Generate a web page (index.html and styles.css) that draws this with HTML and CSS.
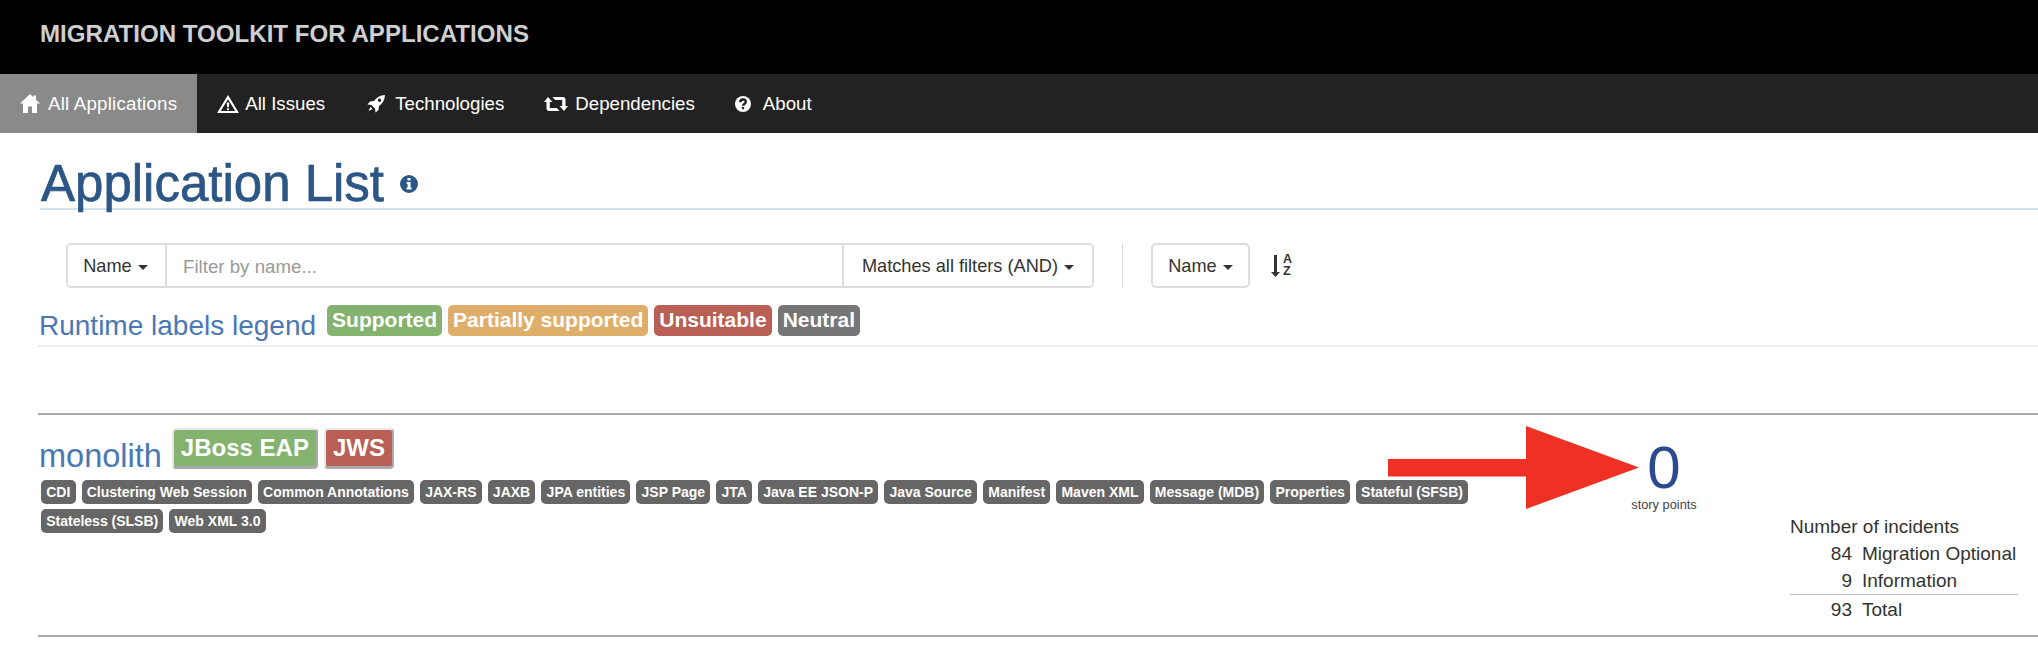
FILE: index.html
```html
<!DOCTYPE html>
<html lang="en">
<head>
    <meta charset="UTF-8">
    <meta name="viewport" content="width=device-width, initial-scale=1.0">
    <title>Application List</title>
    <link rel="stylesheet" href="styles.css">
</head>
<body>
    <header class="brand-bar">MIGRATION TOOLKIT FOR APPLICATIONS</header>
    <nav class="main-nav">
        <a class="nav-item active">
            <svg class="nav-icon" width="20" height="19" viewBox="0 0 20 19"><path d="M10 0 L13.5 3.300 V1.500 H16 V5.700 L20 9.600 H17 V19 H12 V12.500 H8 V19 H3 V9.600 H0 Z"/></svg>
            All Applications
        </a>
        <a class="nav-item issues">
            <svg class="nav-icon" width="22" height="18" viewBox="0 0 23 19"><path fill-rule="evenodd" d="M11.500 0 L23 19 H0 Z M11.500 4.500 L3.800 17 H19.200 Z M10.200 8 H12.800 L12.400 13 H10.600 Z M10.400 14 H12.600 V16 H10.400 Z"/></svg>
            All Issues
        </a>
        <a class="nav-item">
            <svg class="nav-icon" width="20" height="18" viewBox="0 0 20 18"><path fill-rule="evenodd" d="M18 0 C13 .3 9.500 2.500 7 6 L3 6.500 L.5 9.500 L4.500 10 L8 13.500 L8.500 17.500 L11.500 15 L12 11 C15.500 8.500 17.700 5 18 0 Z M12.500 3.600 A1.700 1.700 0 1 0 12.500 7 A1.700 1.700 0 1 0 12.500 3.600 Z M3.500 12 L5.500 14 L1.500 16 Z"/></svg>
            Technologies
        </a>
        <a class="nav-item">
            <svg class="nav-icon retweet" width="24" height="14" viewBox="0 0 24 14"><path d="M4 0 L8.500 5 H5.800 V11 H13 L15.500 14 H5 C3.500 14 2.500 13 2.500 11.500 V5 H0 Z M20 14 L15.500 9 H18.200 V3 H11 L8.500 0 H19 C20.500 0 21.500 1 21.500 2.500 V9 H24 Z"/></svg>
            Dependencies
        </a>
        <a class="nav-item">
            <svg class="nav-icon" width="20" height="16" viewBox="0 0 20 16"><circle cx="8" cy="8" r="8"/><path class="icon-cut" d="M5.200 6.200 C5.200 2.600 10.800 2.600 10.800 5.800 C10.800 8 8 7.800 8 9.800"/><rect class="icon-dot" x="6.900" y="11" width="2.200" height="2.200"/></svg>
            About
        </a>
    </nav>

    <main class="content">
        <div class="page-header">
            <h1>Application List</h1>
            <svg class="info-icon" width="18" height="18" viewBox="0 0 18 18"><path fill-rule="evenodd" d="M9 0 A9 9 0 1 0 9 18 A9 9 0 1 0 9 0 Z M7.400 3 H10.600 V5.600 H7.400 Z M6.600 7 H10.600 V12.600 H11.600 V14.600 H6.600 V12.600 H7.600 V9 H6.600 Z"/></svg>
        </div>

        <div class="toolbar">
            <div class="filter-group">
                <button class="tool-btn name-btn">Name <span class="caret"></span></button>
                <input class="filter-input" type="text" placeholder="Filter by name...">
                <button class="tool-btn match-btn">Matches all filters (AND) <span class="caret"></span></button>
            </div>
            <span class="tool-divider"></span>
            <button class="tool-btn sort-btn">Name <span class="caret"></span></button>
            <div class="sort-icon">
                <svg width="9" height="22" viewBox="0 0 9 22"><path d="M3 0 H6 V17 H9 L4.500 22 L0 17 H3 Z"/></svg>
                <span class="sort-letters"><span>A</span><span>Z</span></span>
            </div>
        </div>

        <div class="legend">
            <span class="legend-title">Runtime labels legend</span>
            <span class="legend-label supported">Supported</span>
            <span class="legend-label partial">Partially supported</span>
            <span class="legend-label unsuitable">Unsuitable</span>
            <span class="legend-label neutral">Neutral</span>
        </div>

        <section class="app-row">
            <div class="app-info">
                <div class="app-title">
                    <a class="app-name">monolith</a>
                    <span class="runtime supported">JBoss EAP</span>
                    <span class="runtime unsuitable">JWS</span>
                </div>
                <div class="tags">
                    <span class="tag">CDI</span>
                    <span class="tag">Clustering Web Session</span>
                    <span class="tag">Common Annotations</span>
                    <span class="tag">JAX-RS</span>
                    <span class="tag">JAXB</span>
                    <span class="tag">JPA entities</span>
                    <span class="tag">JSP Page</span>
                    <span class="tag">JTA</span>
                    <span class="tag">Java EE JSON-P</span>
                    <span class="tag">Java Source</span>
                    <span class="tag">Manifest</span>
                    <span class="tag">Maven XML</span>
                    <span class="tag">Message (MDB)</span>
                    <span class="tag">Properties</span>
                    <span class="tag">Stateful (SFSB)</span>
                    <span class="tag">Stateless (SLSB)</span>
                    <span class="tag">Web XML 3.0</span>
                </div>
            </div>
            <div class="story">
                <div class="story-count">0</div>
                <div class="story-label">story points</div>
            </div>
            <table class="incidents">
                <tr><th colspan="2">Number of incidents</th></tr>
                <tr><td class="num">84</td><td>Migration Optional</td></tr>
                <tr><td class="num">9</td><td>Information</td></tr>
                <tr class="total"><td class="num">93</td><td>Total</td></tr>
            </table>
            <svg class="arrow" width="251" height="83" viewBox="0 0 251 83"><polygon points="0,33 138,33 138,0 251,41.500 138,83 138,50.500 0,50.500"/></svg>
        </section>
    </main>
</body>
</html>
```

FILE: styles.css
```css
body {
    font-family: "Liberation Sans", Arial, sans-serif;
    font-size: 18.7px;
    color: #333;
    background-color: white;
    margin: 0;
    overflow: hidden;
}
.brand-bar {
    background-color: black;
    color: #cfcfcf;
    font-size: 24.1px;
    font-weight: bold;
    height: 74px;
    line-height: 68px;
    padding-left: 40px;
}
.main-nav {
    display: flex;
    height: 59px;
    background-color: #222;
}
.nav-item {
    display: flex;
    align-items: center;
    padding: 0 20px;
    color: white;
}
.nav-item.active {
    background-color: #8a8a8a;
    letter-spacing: 0.22px;
}
.nav-item.issues {
    padding-right: 22px;
}
.nav-icon {
    fill: white;
    margin-right: 8px;
}
.issues .nav-icon {
    margin-right: 6px;
}
.nav-icon.retweet {
    margin-right: 7px;
}
.icon-cut {
    fill: none;
    stroke: #222;
    stroke-width: 2.4;
}
.icon-dot {
    fill: #222;
}
.content {
    padding-left: 38px;
}
.page-header {
    display: flex;
    align-items: flex-end;
    height: 75px;
    margin-left: 2px;
    border-bottom: 2px solid #d3e1ec;
}
h1 {
    margin: 0 0 0 1px;
    font-size: 51px;
    line-height: 48px;
    font-weight: normal;
    color: #2b5685;
    -webkit-text-stroke: 0.7px #2b5685;
}
.info-icon {
    fill: #2b5685;
    margin-left: 16px;
    margin-bottom: 15px;
}
.toolbar {
    display: flex;
    align-items: stretch;
    height: 45px;
    margin: 33px 0 0 28px;
}
.filter-group {
    display: flex;
    width: 1028px;
    border: 2px solid #ddd;
    border-radius: 5px;
    box-sizing: border-box;
}
.tool-btn {
    font-family: inherit;
    font-size: 18.2px;
    color: #333;
    background-color: white;
    border: none;
    padding: 2px 0 0;
}
.name-btn {
    width: 97px;
    padding-right: 2px;
    border-radius: 4px 0 0 4px;
}
.match-btn {
    width: 248px;
    border-radius: 0 4px 4px 0;
}
.filter-input {
    flex: 1;
    min-width: 0;
    font-family: inherit;
    font-size: 18.7px;
    padding: 2px 16px 0;
    border: none;
    border-left: 2px solid #ddd;
    border-right: 2px solid #ddd;
    outline: none;
}
.filter-input::placeholder {
    color: #999;
}
.caret {
    display: inline-block;
    vertical-align: middle;
    margin-left: 1px;
    border-top: 5px solid #333;
    border-left: 5px solid transparent;
    border-right: 5px solid transparent;
}
.tool-divider {
    width: 1px;
    margin: 0 28px;
    background-color: #ddd;
}
.sort-btn {
    width: 99px;
    border: 2px solid #ddd;
    border-radius: 5px;
}
.sort-icon {
    display: flex;
    align-items: center;
    gap: 3px;
    margin-left: 21px;
    fill: #333;
}
.sort-letters {
    display: flex;
    flex-direction: column;
    font-size: 12.5px;
    font-weight: bold;
    line-height: 11.5px;
}
.legend {
    display: flex;
    align-items: flex-start;
    height: 40px;
    margin: 17px 0 0 0;
    border-bottom: 2px solid #eee;
}
.legend-title {
    font-size: 28px;
    color: #4a78b4;
    margin: 3px 11px 0 1px;
    line-height: 36px;
}
.legend-label {
    color: white;
    font-size: 21px;
    font-weight: bold;
    line-height: 30px;
    padding: 0 5px 1px;
    margin-right: 6px;
    border-radius: 5px;
}
.supported { background-color: #84b26f; }
.partial { background-color: #dfae6a; }
.unsuitable { background-color: #b95f55; }
.neutral { background-color: #767676; }
.app-row {
    position: relative;
    display: grid;
    grid-template-columns: 1500px 252px 228px;
    height: 224px;
    margin-top: 66px;
    border-top: 2px solid #aaa;
    border-bottom: 2px solid #aaa;
    box-sizing: border-box;
}
.app-info {
    padding-left: 3px;
}
.app-title {
    display: flex;
    align-items: flex-end;
    margin: 13px 0 0 -2px;
}
.app-name {
    font-size: 32.5px;
    color: #4a78b4;
    line-height: 26px;
    margin-right: 10px;
}
.runtime {
    color: white;
    font-size: 24px;
    font-weight: bold;
    line-height: 36px;
    padding: 0 7px;
    margin-right: 6px;
    border-radius: 4px;
    border: 2px solid #e8e8e8;
    border-bottom: 3px solid #aaa;
    border-right: 2px solid #aaa;
}
.tags {
    display: flex;
    flex-wrap: wrap;
    gap: 5px 6px;
    margin-top: 11px;
}
.tag {
    background-color: #666;
    color: white;
    font-size: 14px;
    font-weight: bold;
    line-height: 24px;
    padding: 0 5.2px;
    border-radius: 5px;
}
.story {
    text-align: center;
    padding-top: 20px;
}
.story-count {
    font-size: 60px;
    color: #2c4a90;
    line-height: 66px;
}
.story-label {
    font-size: 12.8px;
    color: #444;
    margin-top: -4px;
}
.incidents {
    align-self: end;
    border-collapse: collapse;
    width: 228px;
    font-size: 19px;
    color: #333;
    margin-bottom: 11px;
}
.incidents th {
    font-weight: normal;
    text-align: left;
    padding: 0;
    height: 27px;
}
.incidents td {
    padding: 0 0 0 10px;
    height: 27px;
    white-space: nowrap;
}
.incidents .num {
    width: 62px;
    padding: 0;
    text-align: right;
}
.incidents .total td {
    border-top: 1px solid #bbb;
    height: 29px;
}
.arrow {
    position: absolute;
    left: 1350px;
    top: 11px;
    fill: #ee3124;
}
```
